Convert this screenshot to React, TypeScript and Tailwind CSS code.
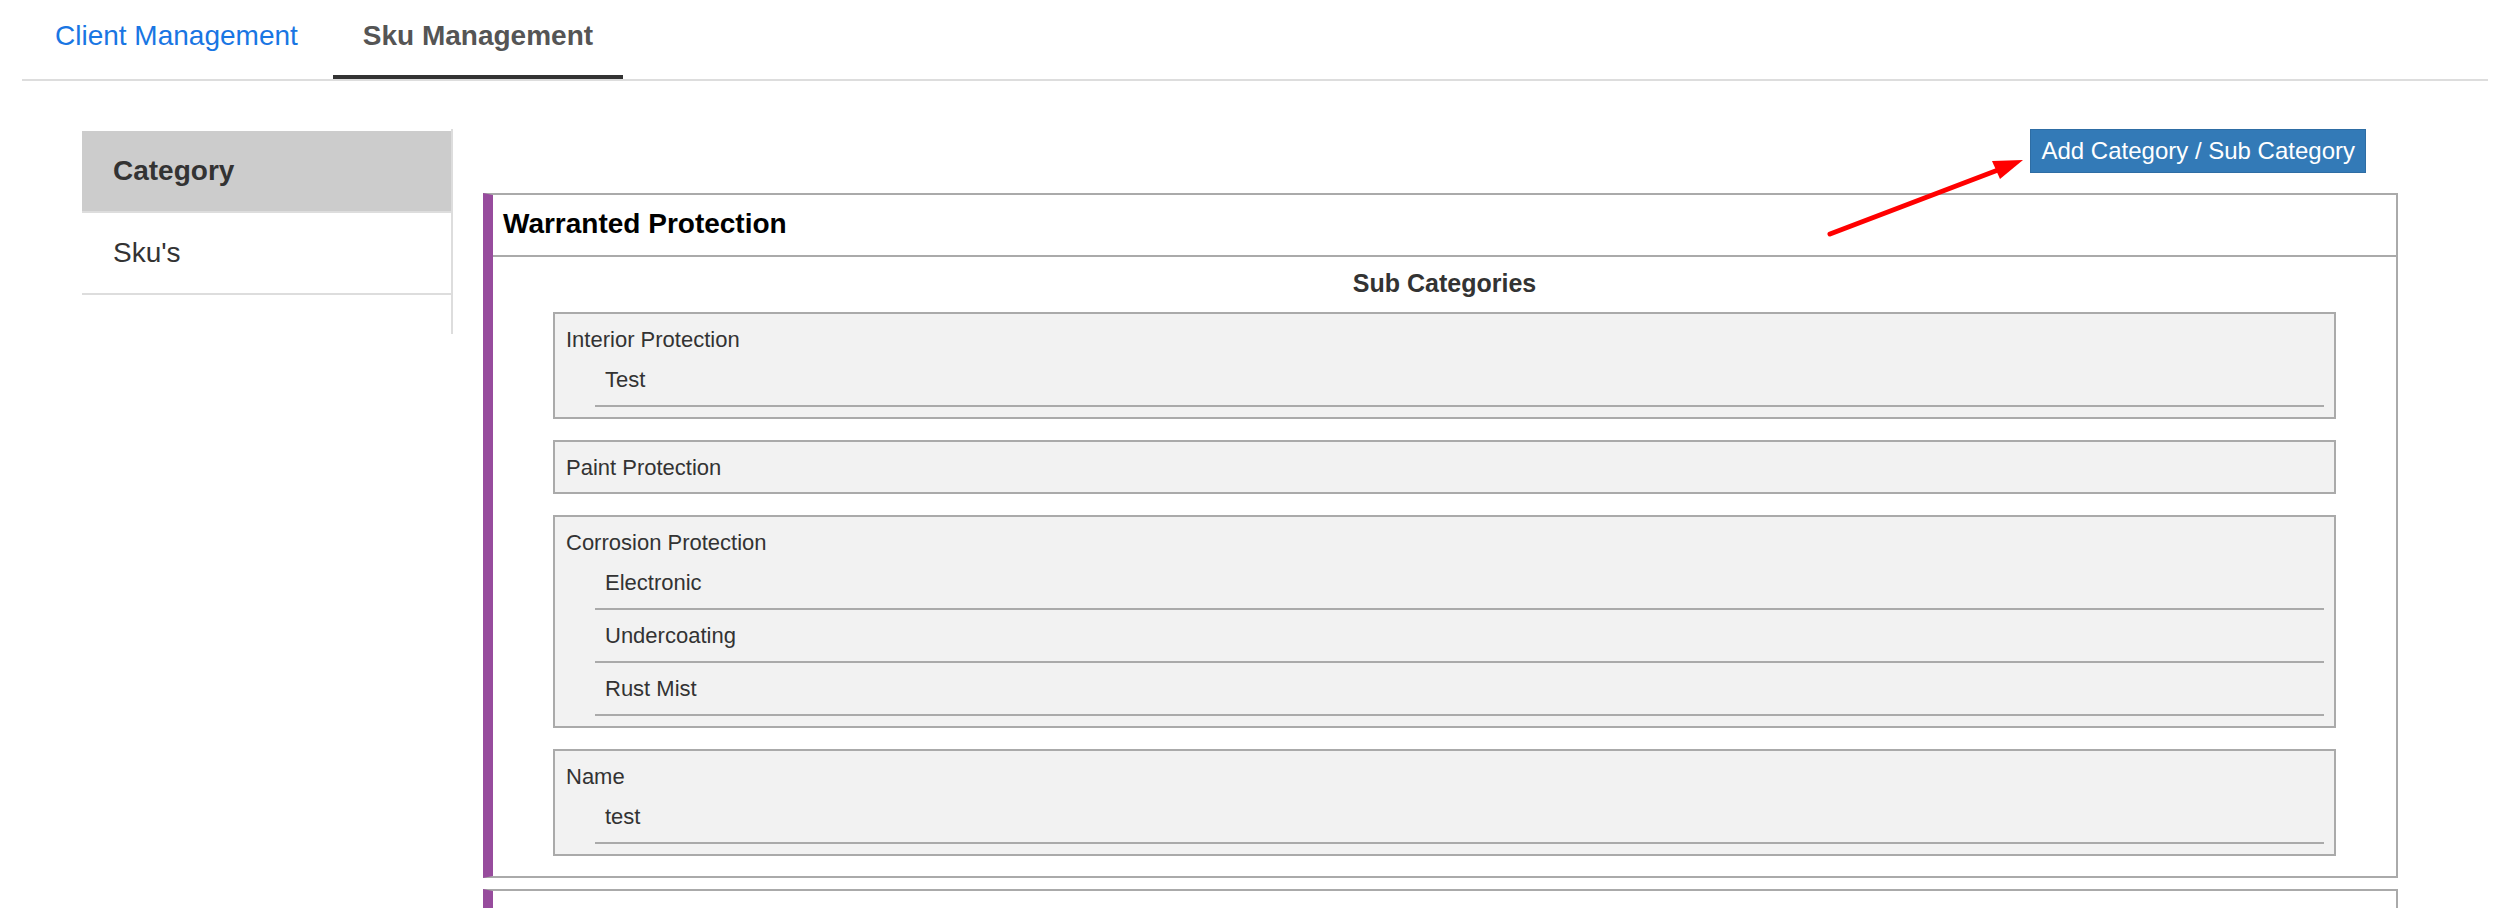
import React from 'react';

type SubCategory = {
  name: string;
  items: string[];
};

const SUB_CATEGORIES: SubCategory[] = [
  { name: 'Interior Protection', items: ['Test'] },
  { name: 'Paint Protection', items: [] },
  { name: 'Corrosion Protection', items: ['Electronic', 'Undercoating', 'Rust Mist'] },
  { name: 'Name', items: ['test'] },
];

function SubCategoryBox({ sub }: { sub: SubCategory }) {
  return (
    <div className="border-2 border-[#aaa] bg-[#f2f2f2] pt-[13px] pb-[10px] text-[22px] text-[#333]">
      <div className="px-[11px] pb-[2px] leading-[25px]">{sub.name}</div>
      {sub.items.length > 0 ? (
        <ul className="ml-[40px] mr-[10px]">
          {sub.items.map((item) => (
            <li key={item} className="border-b-2 border-[#aaa] pt-[13px] pb-[13px] pl-[10px] leading-[25px]">
              {item}
            </li>
          ))}
        </ul>
      ) : null}
    </div>
  );
}

function CategoryCard({ title, subs }: { title: string; subs: SubCategory[] }) {
  return (
    <section className="border-y-2 border-r-2 border-l-[10px] border-[#aaa] border-l-[#974c9d] bg-white">
      <h2 className="border-b-2 border-[#aaa] px-[10px] pt-[13px] pb-[15px] text-[28px] font-bold leading-[32px] text-black">
        {title}
      </h2>
      {subs.length > 0 ? (
        <div className="px-[60px] pt-[12px] pb-[20px]">
          <h3 className="mb-[14px] text-center text-[25px] font-bold leading-[29px] text-[#333]">Sub Categories</h3>
          <div className="flex flex-col gap-[21px]">
            {subs.map((sub) => (
              <SubCategoryBox key={sub.name} sub={sub} />
            ))}
          </div>
        </div>
      ) : null}
    </section>
  );
}

export default function App() {
  return (
    <div className="relative min-h-screen bg-white font-['Liberation_Sans',Arial,sans-serif]">
      <nav className="ml-[22px] mr-[17px] flex border-b-2 border-[#ddd]">
        <a className="ml-[3px] border-b-4 border-transparent px-[30px] pt-[20px] pb-[23px] text-[28px] leading-[32px] text-[#1976e3]" href="#">
          Client Management
        </a>
        <a className="ml-[5px] border-b-4 border-[#333] px-[30px] pt-[20px] pb-[23px] text-[28px] font-bold leading-[32px] text-[#555]" href="#">
          Sku Management
        </a>
      </nav>

      <div className="flex pt-[48px] pl-[82px] pr-[107px]">
        <aside className="w-[371px] shrink-0 self-start border-r-2 border-[#ddd] pt-[2px] pb-[39px] text-[28px] leading-[32px] text-[#333]">
          <div className="border-b-2 border-[#ddd] bg-[#ccc] py-[24px] pl-[31px] font-bold">Category</div>
          <div className="border-b-2 border-[#ddd] py-[24px] pl-[31px]">Sku's</div>
        </aside>

        <main className="ml-[30px] flex-1">
          <div className="flex justify-end pr-[32px]">
            <button
              className="border border-[#2e6da4] bg-[#337ab7] px-[10px] py-[7px] text-[24px] leading-[28px] text-white"
              type="button"
            >
              Add Category / Sub Category
            </button>
          </div>

          <div className="mt-[20px] flex flex-col gap-[11px]">
            <CategoryCard title="Warranted Protection" subs={SUB_CATEGORIES} />
            <CategoryCard title="Extended Warranty" subs={[]} />
          </div>
        </main>
      </div>

      {/* red annotation arrow pointing at the add button */}
      <svg className="pointer-events-none absolute left-[1820px] top-[150px]" width="215" height="95" viewBox="0 0 215 95">
        <line x1="10" y1="84" x2="178" y2="20" stroke="#ff0000" strokeWidth="5" strokeLinecap="round" />
        <polygon points="203,10 172,11 180,29" fill="#ff0000" />
      </svg>
    </div>
  );
}
